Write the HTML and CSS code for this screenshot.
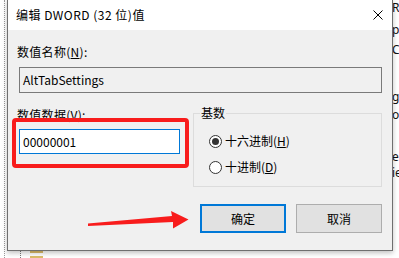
FILE: index.html
```html
<!DOCTYPE html>
<html>
	<head>
		<meta charset="utf-8">
		<title>编辑 DWORD (32 位)值</title>
		<link rel="stylesheet" href="styles.css">
	</head>
	<body>
		<div class="desk">
			<div class="tree-line"></div>
			<div class="tree-bits">
				<div class="tree-dot"></div>
				<div class="folder one"></div>
				<div class="folder two"></div>
			</div>
			<div class="back-text">
				<div class="t1">Re</div>
				<div class="t2">p</div>
				<div class="t3">Co</div>
				<div class="t4">g</div>
				<div class="t5">or</div>
				<div class="t6">es</div>
				<div class="t7">ie</div>
			</div>
			<div class="dialog">
				<div class="titlebar">
					<span class="title">编辑 DWORD (32 位)值</span>
					<svg class="close" width="10" height="10" viewBox="0 0 10 10">
						<path d="M0.5 0.5 L9.5 9.5 M9.5 0.5 L0.5 9.5" stroke="#000" stroke-width="1" fill="none"/>
					</svg>
				</div>
				<div class="body">
					<div class="label">数值名称(<u>N</u>):</div>
					<div class="field readonly">AltTabSettings</div>
					<div class="row">
						<div class="col-data">
							<div class="label">数值数据(<u>V</u>):</div>
							<div class="field edit">00000001</div>
						</div>
						<div class="group">
							<span class="legend">基数</span>
							<div class="radio"><span class="circle on"></span>十六进制(<u>H</u>)</div>
							<div class="radio"><span class="circle"></span>十进制(<u>D</u>)</div>
						</div>
					</div>
					<div class="buttons">
						<div class="btn default">确定</div>
						<div class="btn">取消</div>
					</div>
				</div>
			</div>
			<div class="mark-box"></div>
			<svg class="mark-arrow" width="399" height="258" viewBox="0 0 399 258">
				<polygon points="88,223.5 172,216 171,211 188.5,219.5 173,228.5 173,222 88,226" fill="#f81c1c"/>
			</svg>
		</div>
	</body>
</html>
```

FILE: styles.css
```css
*{
	margin: 0;
	padding: 0;
	box-sizing: border-box;
}
body{
	background-color: #fff;
	font-family: "Noto Sans CJK SC", "Noto Sans", sans-serif;
	font-size: 12px;
	color: #000;
}
.desk{
	position: relative;
	width: 399px;
	height: 258px;
	overflow: hidden;
}
.tree-line{
	position: absolute;
	left: 4px;
	top: 0;
	bottom: 0;
	border-left: 1px dotted #9a9a9a;
}
.tree-bits .tree-dot{
	position: absolute;
	left: 20px;
	top: 249px;
	height: 9px;
	border-left: 1px dotted #777;
}
.tree-bits .folder{
	position: absolute;
	left: 30px;
	width: 13px;
	height: 3px;
	background-color: #dcbc6a;
}
.tree-bits .one{
	top: 250px;
}
.tree-bits .two{
	top: 256px;
}
.back-text{
	position: absolute;
	left: 392px;
	top: 0;
	line-height: 16px;
	font-family: "Noto Sans", sans-serif;
	color: #111;
}
.back-text .t2{ margin-top: 6px; }
.back-text .t3{ margin-top: 4px; }
.back-text .t4{ margin-top: 31px; }
.back-text .t5{ margin-top: 2px; }
.back-text .t6{ margin-top: 26px; }
.back-text .t7{ margin-top: 0; }
.dialog{
	position: absolute;
	left: 7px;
	top: -1px;
	width: 386px;
	height: 252px;
	border: 1px solid #6f6f6f;
	background-color: #f0f0f0;
	box-shadow: 0 2px 5px rgba(0,0,0,0.25);
	display: flex;
	flex-direction: column;
}
.titlebar{
	height: 30px;
	background-color: #fff;
	display: flex;
	align-items: center;
	justify-content: space-between;
	padding: 0 9px 0 8px;
}
.title{
	line-height: 30px;
	letter-spacing: 0.5px;
}
.close{
	display: block;
}
.body{
	flex: 1;
	padding: 14px 10px 0 11px;
}
.label{
	line-height: 16px;
	margin-left: -2px;
	letter-spacing: 0.3px;
}
.field{
	padding-left: 3px;
	white-space: nowrap;
}
.readonly{
	margin-top: 7px;
	height: 26px;
	line-height: 24px;
	border: 1px solid #7a7a7a;
	background-color: #f0f0f0;
}
.row{
	display: flex;
}
.col-data{
	width: 161px;
}
.col-data .label{
	margin-top: 14px;
}
.edit{
	margin-top: 6px;
	height: 25px;
	line-height: 23px;
	border: 1px solid #0078d7;
	background-color: #fff;
}
.group{
	flex: 1;
	margin-left: 13px;
	margin-top: 20px;
	height: 74px;
	border: 1px solid #dcdcdc;
	padding-left: 15px;
}
.legend{
	display: block;
	width: fit-content;
	margin-top: -9px;
	margin-left: -9px;
	padding: 0 1px;
	line-height: 16px;
	background-color: #f0f0f0;
}
.radio{
	display: flex;
	align-items: center;
	height: 20px;
	line-height: 20px;
	margin-top: 6px;
}
.legend + .radio{
	margin-top: 10px;
}
.circle{
	position: relative;
	width: 13px;
	height: 13px;
	border: 1px solid #333;
	border-radius: 50%;
	background-color: #fff;
	margin-right: 3px;
}
.circle.on::after{
	content: "";
	position: absolute;
	left: 2px;
	top: 2px;
	width: 7px;
	height: 7px;
	border-radius: 50%;
	background-color: #333;
}
.buttons{
	display: flex;
	justify-content: flex-end;
	gap: 10px;
	margin-top: 17px;
}
.btn{
	width: 86px;
	height: 29px;
	line-height: 27px;
	text-align: center;
	border: 1px solid #adadad;
	background-color: #e1e1e1;
}
.btn.default{
	border: 2px solid #0078d7;
	line-height: 25px;
}
.mark-box{
	position: absolute;
	left: 12px;
	top: 118px;
	width: 177px;
	height: 50px;
	border: 4px solid #f81c1c;
	border-radius: 4px;
}
.mark-arrow{
	position: absolute;
	left: 0;
	top: 0;
}
```
